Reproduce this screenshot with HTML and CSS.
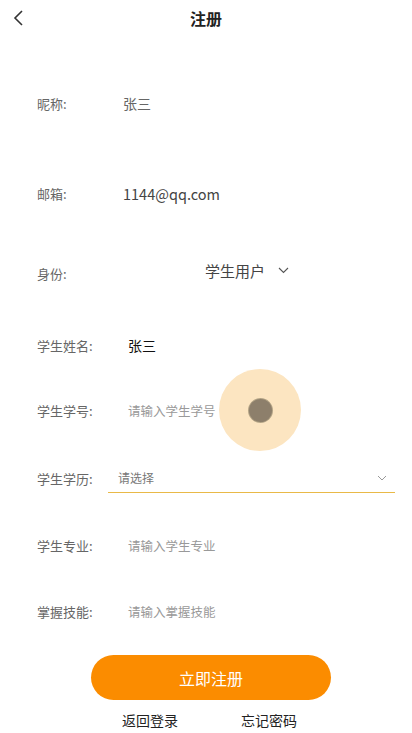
FILE: index.html
```html
<!DOCTYPE html>
<html lang="zh-CN">
<head>
    <meta charset="UTF-8">
    <meta name="viewport" content="width=device-width, initial-scale=1.0">
    <title>注册</title>
    <link rel="stylesheet" href="styles.css">
</head>
<body>

    <div class="page">
        <!-- 顶部导航 -->
        <div class="header">
            <span class="back">
                <svg width="12" height="18" viewBox="0 0 12 18"><path d="M10 2 L3 9 L10 16" fill="none" stroke="#333" stroke-width="1.6"/></svg>
            </span>
            <h1>注册</h1>
        </div>

        <!-- 表单 -->
        <div class="form">
            <div class="row row-1">
                <span class="label">昵称:</span>
                <span class="value plain">张三</span>
            </div>
            <div class="row row-2">
                <span class="label">邮箱:</span>
                <span class="value email">1144@qq.com</span>
            </div>
            <div class="row row-3">
                <span class="label">身份:</span>
                <span class="role">学生用户
                    <svg width="11" height="7" viewBox="0 0 11 7"><path d="M1 1 L5.5 5.5 L10 1" fill="none" stroke="#555" stroke-width="1.1"/></svg>
                </span>
            </div>
            <div class="row row-4">
                <span class="label">学生姓名:</span>
                <span class="value strong">张三</span>
            </div>
            <div class="row row-5">
                <span class="label">学生学号:</span>
                <span class="value hint">请输入学生学号</span>
                <span class="ripple"><span class="dot"></span></span>
            </div>
            <div class="row row-6">
                <span class="label">学生学历:</span>
                <div class="select">
                    <span>请选择</span>
                    <svg width="10" height="6" viewBox="0 0 10 6"><path d="M1 1 L5 5 L9 1" fill="none" stroke="#999" stroke-width="1"/></svg>
                </div>
            </div>
            <div class="row row-7">
                <span class="label">学生专业:</span>
                <span class="value hint">请输入学生专业</span>
            </div>
            <div class="row row-8">
                <span class="label">掌握技能:</span>
                <span class="value hint">请输入掌握技能</span>
            </div>
        </div>

        <button class="submit">立即注册</button>

        <div class="links">
            <a>返回登录</a>
            <a>忘记密码</a>
        </div>
    </div>

</body>
</html>
```

FILE: styles.css
```css
/* 全局 */
body {
    margin: 0;
    padding: 0;
    background-color: #fff;
    font-family: "Noto Sans CJK SC", "Noto Sans", sans-serif;
    color: #333;
}

.page {
    width: 412px;
    height: 733px;
    overflow: hidden;
}

/* 顶部导航 */
.header {
    height: 36px;
    display: flex;
    align-items: center;
    justify-content: center;
    position: relative;
}

.back {
    position: absolute;
    left: 12px;
    top: 9px;
    display: flex;
}

.header h1 {
    margin: 0;
    font-size: 16px;
    font-weight: bold;
    color: #222;
}

/* 表单行 */
.form {
    padding-left: 37px;
}

.row {
    height: 30px;
    display: flex;
    align-items: center;
    position: relative;
}

.row-1 { margin-top: 52px; }
.row-2 { margin-top: 60px; }
.row-3 { margin-top: 50px; }
.row-4 { margin-top: 42px; }
.row-5 { margin-top: 35px; }
.row-6 { margin-top: 38px; }
.row-7 { margin-top: 37px; }
.row-8 { margin-top: 36px; }

.label {
    width: 86px;
    font-size: 13px;
    color: #666;
    flex-shrink: 0;
}

.row-4 .label,
.row-5 .label,
.row-7 .label,
.row-8 .label {
    width: 91px;
}

.row-6 .label {
    width: 71px;
}

.value {
    font-size: 14px;
}

.plain {
    color: #666;
}

.email {
    font-size: 14.5px;
    color: #444;
}

.strong {
    color: #111;
}

.hint {
    font-size: 12.5px;
    color: #999;
}

/* 身份选择 */
.role {
    margin-left: 82px;
    margin-top: -6px;
    font-size: 15px;
    color: #444;
    display: flex;
    align-items: center;
    gap: 13px;
}

/* 点击波纹 */
.ripple {
    position: absolute;
    left: 182px;
    top: -26px;
    width: 82px;
    height: 82px;
    border-radius: 50%;
    background-color: #fce5c1;
    display: flex;
    align-items: center;
    justify-content: center;
}

.dot {
    width: 23px;
    height: 23px;
    border-radius: 50%;
    background-color: #8d7f6b;
    box-shadow: 0 0 0 1px #b3a486;
}

/* 学历下拉 */
.select {
    width: 287px;
    height: 30px;
    box-sizing: border-box;
    padding: 0 8px 0 10px;
    border-bottom: 1.5px solid #e9b947;
    display: flex;
    align-items: center;
    justify-content: space-between;
    font-size: 12px;
    color: #777;
}

/* 注册按钮 */
.submit {
    display: block;
    margin: 29px 0 0 91px;
    width: 240px;
    height: 45px;
    border: none;
    border-radius: 23px;
    background-color: #fb8c00;
    color: #fff;
    font-family: inherit;
    font-size: 16px;
    cursor: pointer;
}

.links {
    margin-top: 10px;
    display: flex;
    gap: 63px;
    padding-left: 122px;
    font-size: 14px;
    color: #222;
}
```
